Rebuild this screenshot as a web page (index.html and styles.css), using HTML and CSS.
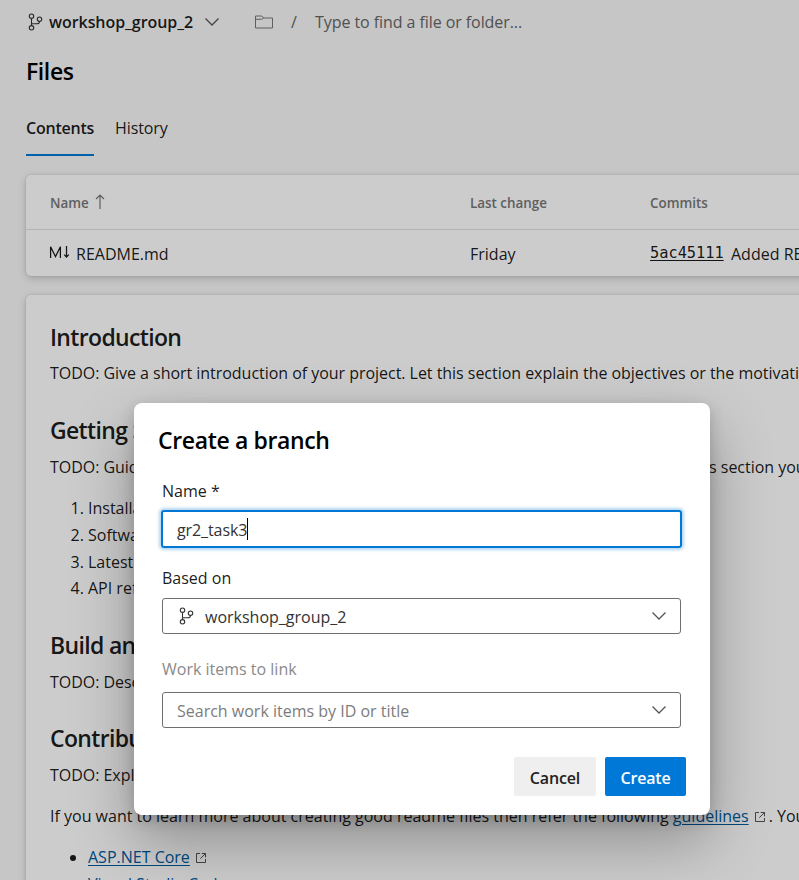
FILE: index.html
```
<!DOCTYPE html>
<html lang="en">
<head>
<meta charset="utf-8">
<title>Files</title>
<link rel="stylesheet" href="styles.css">
</head>
<body>
<svg class="defs" aria-hidden="true">
  <symbol id="branch" viewBox="0 0 16 18">
    <g fill="none" stroke="currentColor" stroke-width="1.1">
      <circle cx="4.5" cy="3.2" r="2.2"/><circle cx="4.5" cy="14.8" r="2.2"/><circle cx="12.5" cy="6.2" r="2.2"/>
      <path d="M4.5 5.4v7.2M12.5 8.4c0 2-1 2.4-3 2.4h-5"/>
    </g>
  </symbol>
  <symbol id="chevron" viewBox="0 0 16 10"><path d="M1.5 1.5 8 8l6.5-6.5" fill="none" stroke="currentColor" stroke-width="1.3"/></symbol>
  <symbol id="external" viewBox="0 0 12 12"><path d="M5 1.5H1.5v9h9V7M6.7 1.5h3.8v3.8M10.5 1.5 5.3 6.7" fill="none" stroke="currentColor"/></symbol>
</svg>
<main class="page">
  <div class="path-bar">
    <svg class="ico-branch"><use href="#branch"/></svg>
    <span class="branch-name">workshop_group_2</span>
    <svg class="ico-chevron path-chevron"><use href="#chevron"/></svg>
    <svg class="ico-folder" viewBox="0 0 18 14"><path d="M.5 13V1h6.3l2 2h8.7v10zM.5 4.3h6l2.3-1.3" fill="none" stroke="currentColor"/></svg>
    <span class="slash">/</span>
    <span class="path-hint">Type to find a file or folder...</span>
  </div>
  <h1 class="page-title">Files</h1>
  <nav class="tabs"><span class="tab active">Contents</span><span class="tab">History</span></nav>

  <section class="card files">
    <div class="row head">
      <span class="cell">Name <svg class="ico-sort" viewBox="0 0 10 15"><path d="M5 15V1M1 5l4-4 4 4" fill="none" stroke="currentColor" stroke-width="1.2"/></svg></span>
      <span>Last change</span><span>Commits</span>
    </div>
    <div class="row item">
      <span class="cell file"><svg class="ico-md" viewBox="0 0 21 12"><path d="M1.6 12V.8L6.5 10.6 11.4.8V12M17.5 0v11M15.2 8.6l2.3 2.4 2.3-2.4" fill="none" stroke="currentColor" stroke-width="1.25"/></svg>README.md</span>
      <span>Friday</span>
      <span class="commit"><a class="hash">5ac45111</a>Added README.md</span>
    </div>
  </section>

  <article class="card readme">
    <section>
      <h2>Introduction</h2>
      <p>TODO: Give a short introduction of your project. Let this section explain the objectives or the motivation behind this project.</p>
    </section>
    <section>
      <h2>Getting Started</h2>
      <p>TODO: Guide users through getting your code up and running on their own system. In this section you can talk about:</p>
      <ol>
        <li>Installation process</li>
        <li>Software dependencies</li>
        <li>Latest releases</li>
        <li>API references</li>
      </ol>
    </section>
    <section>
      <h2>Build and Test</h2>
      <p>TODO: Describe and show how to build your code and run the tests.</p>
    </section>
    <section>
      <h2>Contribute</h2>
      <p>TODO: Explain how other users and developers can contribute to make your code better.</p>
      <p class="more">If you want to learn more about creating good readme files then refer the following <a>guidelines</a><svg class="ico-ext"><use href="#external"/></svg>. You can also seek inspiration from the below readme files:</p>
      <ul>
        <li><a>ASP.NET Core</a><svg class="ico-ext"><use href="#external"/></svg></li>
        <li><a>Visual Studio Code</a><svg class="ico-ext"><use href="#external"/></svg></li>
      </ul>
    </section>
  </article>
</main>

<div class="overlay">
  <div class="dialog" role="dialog">
    <h2 class="dialog-title">Create a branch</h2>
    <div class="form">
      <label class="label">Name *</label>
      <div class="input"><span>gr2_task3</span><i class="caret"></i></div>
      <label class="label based">Based on</label>
      <div class="select"><svg class="ico-branch"><use href="#branch"/></svg><span class="value">workshop_group_2</span><svg class="ico-chevron"><use href="#chevron"/></svg></div>
      <label class="label muted">Work items to link</label>
      <div class="select"><span class="value placeholder">Search work items by ID or title</span><svg class="ico-chevron"><use href="#chevron"/></svg></div>
    </div>
    <div class="actions"><button class="btn">Cancel</button><button class="btn primary">Create</button></div>
  </div>
</div>
</body>
</html>
```
FILE: styles.css
```
* { box-sizing: border-box; }
html, body { height: 880px; overflow: hidden; }
body {
  margin: 0;
  background: #f8f8f8;
  color: rgba(0, 0, 0, .9);
  font: 16px/25px "Open Sans", "Noto Sans", sans-serif;
}
h1, h2, p, ol, ul { margin: 0; }
svg { flex: none; }
.defs { display: none; }

.page { height: 880px; padding: 9px 0 0 26px; overflow: hidden; }

.path-bar { display: flex; align-items: center; height: 26px; white-space: nowrap; }
.ico-branch { width: 16px; height: 18px; color: #333; }
.path-bar .ico-branch { margin-left: 1px; }
.branch-name { width: 144px; margin-left: 6px; font-weight: 570; letter-spacing: -.06px; }
.ico-chevron { width: 16px; height: 10px; color: #555; }
.path-chevron { margin-left: 11px; }
.ico-folder { width: 18px; height: 14px; margin-left: 35px; color: #777; }
.slash { width: 8px; margin-left: 18px; color: #666; }
.path-hint { margin-left: 16px; color: #666; letter-spacing: -.07px; }

.page-title { height: 30px; margin-top: 21px; font-size: 23px; line-height: 30px; font-weight: 560; letter-spacing: -.4px; color: #000; }
.tabs { display: flex; gap: 21px; height: 42px; margin-top: 28px; }
.tab { height: 42px; line-height: 28px; letter-spacing: -.1px; }
.tab.active { width: 68px; font-weight: 570; letter-spacing: -.23px; border-bottom: 2px solid #0078d4; }

.card {
  margin-right: -12px;
  background: #fff;
  border-radius: 5px;
  box-shadow: 0 3px 8px rgba(0, 0, 0, .16), 0 0 3px rgba(0, 0, 0, .14);
}
.files { height: 101px; margin-top: 19px; }
.row { display: grid; grid-template-columns: 420px 180px 1fr; align-items: center; padding: 2px 0 0 24px; }
.head { height: 55px; border-bottom: 1px solid #e0e0e0; font-size: 13.4px; font-weight: 560; color: #777; }
.cell { display: flex; align-items: center; }
.ico-sort { width: 10px; height: 15px; margin: -3px 0 0 6px; }
.item { height: 46px; white-space: nowrap; }
.ico-md { width: 21px; height: 12px; margin: -4px 6px 0 -1px; }
.commit { display: flex; align-items: center; min-width: 0; overflow: hidden; }
.hash { flex: none; width: 81px; margin-top: -3px; font: 15.3px/24px "DejaVu Sans Mono", monospace; text-decoration: underline; text-underline-offset: 2px; }

.readme { display: flex; flex-direction: column; gap: 29px; height: 640px; margin-top: 19px; padding: 27px 0 0 24px; white-space: nowrap; overflow: hidden; }
.readme h2 { margin-bottom: 9px; font-size: 23px; line-height: 30px; font-weight: 560; letter-spacing: -.66px; }
.readme p { letter-spacing: -.035px; }
.readme section:nth-child(n+2) p { padding-top: 1px; margin-bottom: -1px; }
.readme .more { margin-top: 16px; letter-spacing: 0; }
.readme ol, .readme ul { padding-left: 38px; line-height: 26.8px; margin-top: 16px; }
.readme ol { margin-bottom: -1px; }
.readme a { color: #005a9e; text-decoration: underline; text-underline-offset: 2px; }
.ico-ext { width: 12px; height: 12px; margin: 0 3px -1px 5px; color: #555; }

.overlay { position: absolute; inset: 0; padding: 403px 0 0 134px; background: rgba(0, 0, 0, .2); overflow: hidden; }
.dialog {
  width: 576px;
  height: 412px;
  padding: 22px 24px 0;
  background: #fff;
  border-radius: 8px;
  box-shadow: 0 26px 62px rgba(0, 0, 0, .3), 0 5px 15px rgba(0, 0, 0, .18);
}
.dialog-title { font-size: 23px; line-height: 30px; font-weight: 570; letter-spacing: -.36px; color: #000; }
.form { display: flex; flex-direction: column; padding: 23px 5px 0 4px; }
.label { height: 26px; line-height: 26px; }
.input {
  display: flex;
  align-items: center;
  height: 38px;
  margin: 6px -1px 0;
  padding: 2px 0 0 14px;
  border: 2px solid #0078d4;
  border-radius: 3px;
  box-shadow: 0 0 3px 2px rgba(0, 120, 212, .3);
  color: #333;
  letter-spacing: -.1px;
}
.caret { width: 1px; height: 22px; margin-top: -2px; background: #000; }
.based { margin-top: 17px; }
.select { display: flex; align-items: center; height: 36px; margin-top: 7px; padding: 0 13px 0 14px; border: 1px solid #6e6e6e; border-radius: 3px; }
.select .ico-branch { margin-left: 1px; }
.value { flex: 1; padding-top: 2px; color: #333; }
.select .ico-branch + .value { margin-left: 11px; }
.muted { margin-top: 22px; color: #8a8a8a; }
.muted + .select { margin-top: 10px; }
.value.placeholder { color: #7c7c7c; }
.actions { display: flex; justify-content: flex-end; gap: 9px; margin-top: 29px; }
.btn { width: 82px; height: 39px; padding: 2px 0 0; border: 0; border-radius: 2px; background: #efefef; color: #222; font: 570 16px/24px "Open Sans", sans-serif; letter-spacing: -.15px; }
.btn.primary { width: 81px; background: #0078d7; color: #fff; font-weight: 600; }
```
